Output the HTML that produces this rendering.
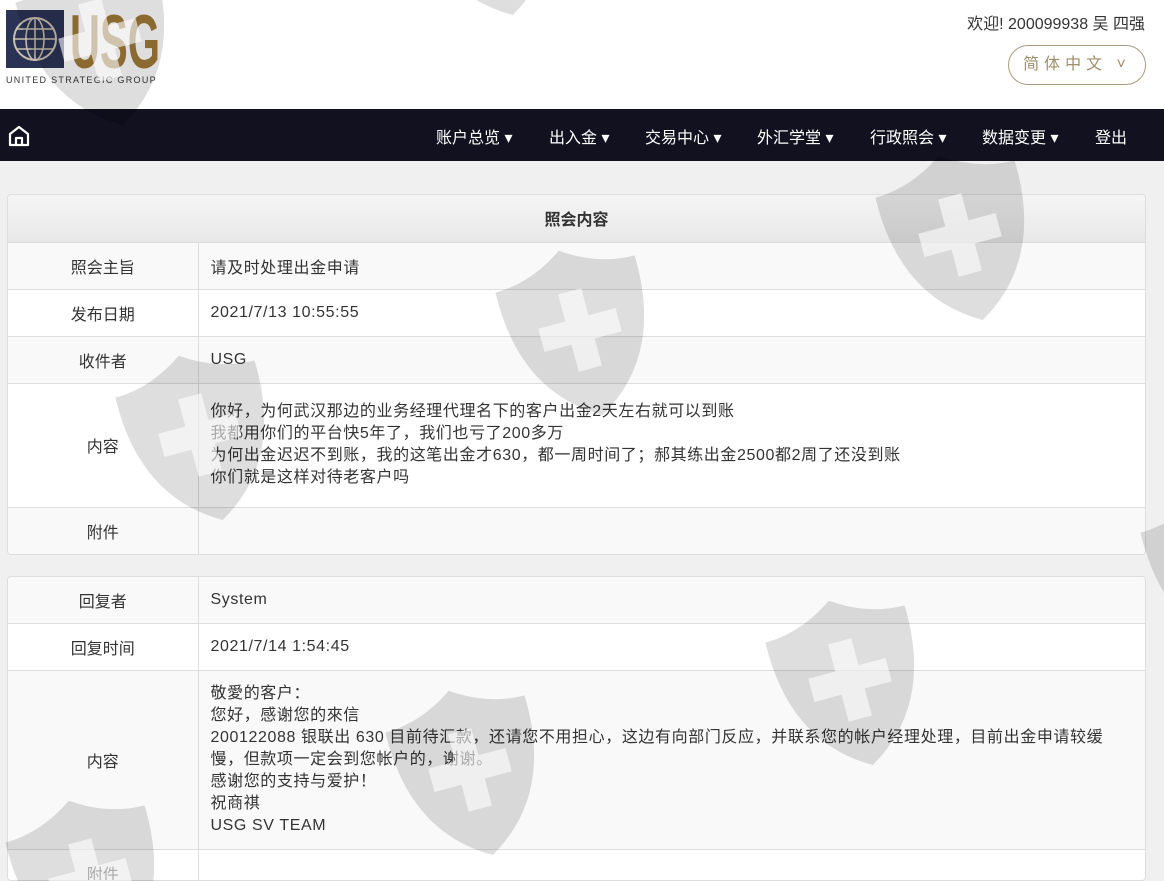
<!DOCTYPE html>
<html><head><meta charset="utf-8"><style>
*{box-sizing:border-box;margin:0;padding:0}
html,body{width:1164px;height:881px;overflow:hidden}
body{background:#f0f0f0;font-family:"Liberation Sans","Noto Sans CJK SC",sans-serif;color:#333;position:relative}
.top{height:109px;background:#fff;position:relative}
.welcome{position:absolute;right:19px;top:10px;font-size:16px;color:#333}
.lang{position:absolute;left:1008px;top:45px;width:138px;height:40px;border:1px solid #a89a80;border-radius:20px;color:#a08d6a;font-size:16px;letter-spacing:5px;text-align:center;line-height:38px}
.nav{height:52px;background:#11111f;position:relative;color:#fff;font-size:16px}
.nav span{position:absolute;top:15px}
.card{position:absolute;left:7px;width:1139px;background:#fff;border:1px solid #ddd;border-radius:4px;overflow:hidden}
table{border-collapse:collapse;width:100%;font-size:16px}
td{border-top:1px solid #ddd;padding:0 12px;vertical-align:middle}
td.l{width:190px;text-align:center;border-right:1px solid #ddd}
tr.g td{background:#f9f9f9}
th{height:47px;font-size:16px;background:linear-gradient(#f5f5f5,#e8e8e8)}
td:not(.l){letter-spacing:0.6px}
.c{line-height:22px;padding-right:18px}
.wm{position:absolute;pointer-events:none;left:0;top:0}
</style></head><body>
<div class="top">
<svg style="position:absolute;left:6px;top:10px" width="156" height="60">
<rect x="0" y="0" width="58" height="58" fill="#2b3354"/>
<circle cx="29" cy="29" r="21" fill="none" stroke="#c9c0b0" stroke-width="2"/>
<ellipse cx="29" cy="29" rx="9" ry="21" fill="none" stroke="#c9c0b0" stroke-width="1.5"/>
<path d="M8 29h42M11 19h36M11 39h36M29 8v42" stroke="#c9c0b0" stroke-width="1.5"/>
<text x="64" y="58" font-family="Liberation Sans" font-weight="bold" font-size="76" fill="#a07a3a" textLength="90" lengthAdjust="spacingAndGlyphs">USG</text>
</svg>
<div style="position:absolute;left:6px;top:75px;font-size:9px;letter-spacing:1.3px;color:#333">UNITED STRATEGIC GROUP</div>
<div class="welcome">欢迎! 200099938 吴 四强</div>
<div class="lang">简体中文 ˅</div>
</div>
<div class="nav">
<svg style="position:absolute;left:8px;top:16px" width="22" height="22" viewBox="0 0 22 22"><path d="M2 20V9L11 2l9 7v11zM8 20v-7h6v7" fill="none" stroke="#fff" stroke-width="2.2" stroke-linejoin="round"/></svg>
<span style="left:436px">账户总览 ▾</span>
<span style="left:549px">出入金 ▾</span>
<span style="left:645px">交易中心 ▾</span>
<span style="left:757px">外汇学堂 ▾</span>
<span style="left:870px">行政照会 ▾</span>
<span style="left:982px">数据变更 ▾</span>
<span style="left:1095px">登出</span>
</div>
<div class="card" style="top:194px">
<table>
<tr><th colspan="2">照会内容</th></tr>
<tr class="g" style="height:47px"><td class="l">照会主旨</td><td>请及时处理出金申请</td></tr>
<tr style="height:47px"><td class="l">发布日期</td><td>2021/7/13 10:55:55</td></tr>
<tr class="g" style="height:47px"><td class="l">收件者</td><td>USG</td></tr>
<tr style="height:124px"><td class="l">内容</td><td class="c">你好，为何武汉那边的业务经理代理名下的客户出金2天左右就可以到账<br>我都用你们的平台快5年了，我们也亏了200多万<br>为何出金迟迟不到账，我的这笔出金才630，都一周时间了；郝其练出金2500都2周了还没到账<br>你们就是这样对待老客户吗</td></tr>
<tr class="g" style="height:47px"><td class="l">附件</td><td></td></tr>
</table></div>
<div class="card" style="top:576px;height:305px">
<table>
<tr class="g" style="height:46px"><td class="l" style="border-top:0">回复者</td><td style="border-top:0">System</td></tr>
<tr style="height:47px"><td class="l">回复时间</td><td>2021/7/14 1:54:45</td></tr>
<tr class="g" style="height:179px"><td class="l">内容</td><td class="c">敬愛的客户：<br>您好，感谢您的來信<br>200122088 银联出 630 目前待汇款，还请您不用担心，这边有向部门反应，并联系您的帐户经理处理，目前出金申请较缓慢，但款项一定会到您帐户的，谢谢。<br>感谢您的支持与爱护！<br>祝商祺<br>USG SV TEAM</td></tr>
<tr style="height:47px"><td class="l">附件</td><td></td></tr>
</table></div>
<svg class="wm" width="1164" height="881">
<defs><g id="s"><path d="M-72-58Q-35-58 0-82Q35-58 72-58Q75 45 0 88Q-75 45-72-58z" fill="#000" fill-opacity="0.13"/><path d="M-12-40h24v28h28v24h-28v28h-24v-28h-28v-24h28z" fill="#fff" fill-opacity="0.6"/></g></defs>
<use href="#s" transform="translate(100,40) rotate(-15)"/>
<use href="#s" transform="translate(960,235) rotate(-15)"/>
<use href="#s" transform="translate(580,330) rotate(-15)"/>
<use href="#s" transform="translate(200,435) rotate(-15)"/>
<use href="#s" transform="translate(850,680) rotate(-15)"/>
<use href="#s" transform="translate(470,770) rotate(-15)"/>
<use href="#s" transform="translate(90,880) rotate(-15)"/>
<use href="#s" transform="translate(490,-70) rotate(-15)"/>
<use href="#s" transform="translate(1225,570) rotate(-15)"/>
</svg>
</body></html>
